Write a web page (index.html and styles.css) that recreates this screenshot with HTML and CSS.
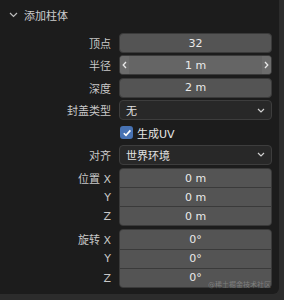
FILE: index.html
```html
<!DOCTYPE html>
<html>
<head>
<meta charset="utf-8">
<link rel="stylesheet" href="styles.css">
</head>
<body>
<div class="panel">
  <div class="header">
    <svg class="chev" width="9" height="6" viewBox="0 0 9 6"><path d="M1 1 L4.5 4.5 L8 1" fill="none" stroke="#bdbdbd" stroke-width="1.2"/></svg>
    <span class="title">添加柱体</span>
  </div>
  <div class="rows">
    <div class="row"><div class="label">顶点</div><div class="field num">32</div></div>
    <div class="row"><div class="label">半径</div>
      <div class="field num hover">
        <span class="arr l"><svg width="5" height="8" viewBox="0 0 5 8"><path d="M4 1 L1.2 4 L4 7" fill="none" stroke="#e8e8e8" stroke-width="1.3"/></svg></span>
        <span class="val">1 m</span>
        <span class="arr r"><svg width="5" height="8" viewBox="0 0 5 8"><path d="M1 1 L3.8 4 L1 7" fill="none" stroke="#e8e8e8" stroke-width="1.3"/></svg></span>
      </div>
    </div>
    <div class="row"><div class="label">深度</div><div class="field num">2 m</div></div>
    <div class="row"><div class="label">封盖类型</div>
      <div class="field drop"><span>无</span><svg width="8" height="5" viewBox="0 0 8 5"><path d="M1 1 L4 4 L7 1" fill="none" stroke="#d0d0d0" stroke-width="1.2"/></svg></div>
    </div>
    <div class="row"><div class="label"></div>
      <div class="check"><span class="box"><svg width="10" height="10" viewBox="0 0 10 10"><path d="M1.8 5.2 L4 7.4 L8.4 2.4" fill="none" stroke="#fff" stroke-width="1.6"/></svg></span><span>生成UV</span></div>
    </div>
    <div class="row"><div class="label">对齐</div>
      <div class="field drop"><span>世界环境</span><svg width="8" height="5" viewBox="0 0 8 5"><path d="M1 1 L4 4 L7 1" fill="none" stroke="#d0d0d0" stroke-width="1.2"/></svg></div>
    </div>
    <div class="group">
      <div class="labels"><div>位置 X</div><div>Y</div><div>Z</div></div>
      <div class="stack"><div>0 m</div><div>0 m</div><div>0 m</div></div>
    </div>
    <div class="group">
      <div class="labels"><div>旋转 X</div><div>Y</div><div>Z</div></div>
      <div class="stack"><div>0°</div><div>0°</div><div>0°</div></div>
    </div>
  </div>
  <div class="mark">@稀土掘金技术社区</div>
</div>
</body>
</html>
```
FILE: styles.css
```css
html, body {
  margin: 0;
  padding: 0;
}
body {
  background: #2c2c2c;
  width: 284px;
  height: 300px;
  overflow: hidden;
  font-family: "DejaVu Sans", "Noto Sans CJK SC", sans-serif;
  font-size: 11px;
  color: #e6e6e6;
}
.panel {
  position: relative;
  width: 279px;
  height: 294px;
  background: #1c1c1c;
  border-radius: 0 0 6px 0;
  box-sizing: border-box;
}
.header {
  height: 33px;
  display: flex;
  align-items: center;
  padding-left: 9px;
  padding-bottom: 3px;
  box-sizing: border-box;
}
.chev {
  margin-right: 6px;
}
.title {
  font-size: 11px;
  color: #cccccc;
}
.rows {
  display: flex;
  flex-direction: column;
  gap: 2.4px;
  padding-right: 7px;
}
.row {
  display: flex;
  height: 20px;
  align-items: center;
}
.label, .labels {
  width: 111px;
  margin-right: 8px;
  text-align: right;
  color: #c8c8c8;
  flex: none;
}
.field {
  flex: 1;
  height: 20px;
  box-sizing: border-box;
  border-radius: 4px;
  display: flex;
  align-items: center;
}
.num {
  background: #545454;
  border: 1px solid #3a3a3a;
  justify-content: center;
  color: #eaeaea;
}
.num.hover {
  background: #656565;
  justify-content: space-between;
  padding: 0;
}
.arr {
  width: 9px;
  height: 100%;
  display: flex;
  align-items: center;
  justify-content: center;
  background: #6c6c6c;
}
.arr.l { border-radius: 3px 0 0 3px; }
.arr.r { border-radius: 0 3px 3px 0; }
.val { flex: 1; text-align: center; }
.drop {
  background: #282828;
  border: 1px solid #3d3d3d;
  justify-content: space-between;
  padding: 0 6px 0 6px;
  color: #e2e2e2;
}
.check {
  display: flex;
  align-items: center;
  gap: 4px;
  color: #e6e6e6;
}
.box {
  width: 13px;
  height: 13px;
  background: #4772b3;
  border-radius: 3px;
  display: flex;
  align-items: center;
  justify-content: center;
  margin-left: 1px;
}
.group {
  display: flex;
  height: 58.5px;
  margin-top: 0.6px;
}
.labels {
  display: flex;
  flex-direction: column;
}
.labels div {
  flex: 1;
  display: flex;
  align-items: center;
  justify-content: flex-end;
}
.stack {
  flex: 1;
  display: flex;
  flex-direction: column;
  border: 1px solid #3a3a3a;
  border-radius: 4px;
  overflow: hidden;
  background: #3a3a3a;
  gap: 1px;
}
.stack div {
  flex: 1;
  background: #545454;
  display: flex;
  align-items: center;
  justify-content: center;
  color: #eaeaea;
}
.mark {
  position: absolute;
  right: 8px;
  bottom: 5px;
  font-size: 7px;
  color: rgba(210, 210, 210, 0.35);
}
```
